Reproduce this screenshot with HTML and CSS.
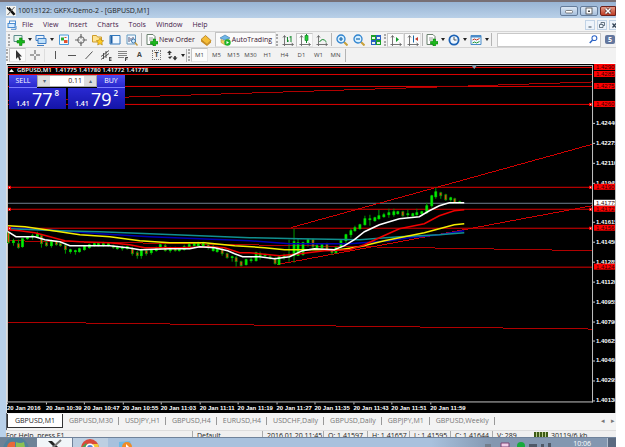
FILE: index.html
```
<!DOCTYPE html>
<html lang="en">
<head>
<meta charset="utf-8">
<title>10013122: GKFX-Demo-2 - [GBPUSD,M1]</title>
<link rel="stylesheet" href="styles.css">
</head>
<body>
<svg class="defs" aria-hidden="true">
  <symbol id="doc" viewBox="0 0 12 12"><path d="M1 .5h6l2 2v8H1z" fill="#fff" stroke="#69806c"/><path d="M3 4h4M3 6h3" stroke="#999"/><path d="M7 5h2.500v2.500H12V10H9.500v2H7v-2H4.500V7.500H7z" fill="#1cb81c" stroke="#07850b" stroke-width=".6"/></symbol>
  <symbol id="axes" viewBox="0 0 12 12"><path d="M2.500 2v8.500H11M.500 10.500h2v1.500M1 3.500L2.500 1.500 4 3.500M9.500 9l2 1.500-2 1.500" fill="none" stroke="#555" stroke-width=".8"/></symbol>
  <symbol id="lens" viewBox="0 0 12 12"><path d="M7.500 7.500l4 4" stroke="#c9a13b" stroke-width="2"/><circle cx="5" cy="5" r="4" fill="#d9f0ff" stroke="#2f84cf" stroke-width="1.300"/></symbol>
  <symbol id="app" viewBox="0 0 10 10"><path fill="#f4f4f0" d="M0 0h10v10H0z"/><path d="M1 1.500L8 9M3 1.500L9 8.500" stroke="#111" stroke-width="1.200"/><path d="M8.500 1L1.500 9" stroke="#555"/></symbol>
</svg>
<div class="screen">
  <div class="window">
    <header class="titlebar">
      <svg class="i10"><use href="#app"/></svg>
      <h1>10013122: GKFX-Demo-2 - [GBPUSD,M1]</h1>
      <div class="winbtns">
        <button aria-label="Minimize"><svg viewBox="0 0 10 8"><rect x="1.500" y="3.500" width="7" height="2.500" rx="1" fill="#fff" stroke="#555" stroke-width=".7"/></svg></button>
        <button aria-label="Maximize"><svg viewBox="0 0 10 8"><rect x="2" y="1" width="6" height="6" fill="#fff" stroke="#444" stroke-width=".8"/><path d="M4 3.500h2v1.500H4z" fill="#444"/></svg></button>
        <button class="close" aria-label="Close"><svg viewBox="0 0 10 8"><path d="M2.500 1.500l5 5m0-5l-5 5" stroke="#422" stroke-width="2.800"/><path d="M2.500 1.500l5 5m0-5l-5 5" stroke="#fff" stroke-width="1.600"/></svg></button>
      </div>
    </header>
    <nav class="menu">
      <svg class="i10" viewBox="0 0 10 10"><rect x="2.500" y="1" width="6" height="4" fill="#fff" stroke="#4a8bd0"/><rect x="1" y="3.500" width="7" height="4" fill="#d9ecff" stroke="#4a8bd0"/><path d="M4 9.300h5V6" fill="none" stroke="#4a8bd0"/></svg>
      <a href="#">File</a><a href="#">View</a><a href="#">Insert</a><a href="#">Charts</a><a href="#">Tools</a><a href="#">Window</a><a href="#">Help</a>
      <div class="mdibtns">
        <button aria-label="Minimize chart"><svg viewBox="0 0 8 8"><path d="M2.500 6h3" stroke="#345"/></svg></button>
        <button aria-label="Restore chart"><svg viewBox="0 0 8 8"><path d="M3 3V1.500h3.500v3H5M1.500 3.500H5v3H1.500z" fill="none" stroke="#456" stroke-width=".8"/></svg></button>
        <button aria-label="Close chart"><svg viewBox="0 0 8 8"><path d="M2.500 2.500l3.500 4m0-4l-3.500 4" stroke="#345" stroke-width="1.200"/></svg></button>
      </div>
    </nav>
    <div class="toolbar main">
      <i class="grip"></i>
      <button class="tool drop" aria-label="New chart"><svg viewBox="0 0 12 12"><path d="M1 1.500h8v6H1z" fill="#e8f5ef" stroke="#5b8c8a"/><path d="M6.500 4h2.500v2.500h2.500v2.500H9v2.500H6.500V9H4V6.500h2.500z" fill="#17b51b" stroke="#067d0b" stroke-width=".6"/></svg></button>
      <button class="tool drop" aria-label="Profiles"><svg viewBox="0 0 12 12"><path d="M1 1.500h8v5H1z" fill="#eaf4ff" stroke="#3d7dc3"/><path d="M3 4.500h8v5H3z" fill="#bfe0fa" stroke="#3d7dc3"/><path d="M2 11.500h7" stroke="#3d7dc3"/></svg></button>
      <button class="tool" aria-label="Market Watch"><svg viewBox="0 0 12 12"><path d="M1.500 1h9v9.500h-9z" fill="#f3faff" stroke="#4c9ad9"/><path d="M3 3.500h3v3H3z" fill="#2caa31"/><path d="M6 6h3.500v3H6z" fill="#e5502d"/><path d="M6.500 3.500h2" stroke="#e5502d"/></svg></button>
      <button class="tool" aria-label="Data Window"><svg viewBox="0 0 12 12"><circle cx="6" cy="6" r="3.300" fill="none" stroke="#666"/><path d="M6 0v4.500M6 7.500V12M0 6h4.500M7.500 6H12" stroke="#666" stroke-width="1.200"/></svg></button>
      <button class="tool" aria-label="Navigator"><svg viewBox="0 0 12 12"><path d="M.5 1.500h4l1 1.500h4v5h-9z" fill="#ffe493" stroke="#cd9c2a"/><path d="M8 4l1.200 2.300 2.500.4-1.800 1.700.4 2.600L8 9.800 5.700 11l.4-2.600-1.800-1.700 2.500-.4z" fill="#ffcc23" stroke="#ad7c0b" stroke-width=".6"/></svg></button>
      <button class="tool" aria-label="Terminal"><svg viewBox="0 0 12 12"><path d="M1 1.500h10v8.500H1z" fill="#f1f8ff" stroke="#3278bd"/><path d="M1.500 2h2v7.500h-2z" fill="#1d5ea4"/></svg></button>
      <button class="tool" aria-label="Strategy Tester"><svg viewBox="0 0 12 12"><path d="M1 1h8.500v9H1z" fill="#f1f8ff" stroke="#669ac0"/><path d="M3 3v5m2-4v3m2-4v3" stroke="#557"/><circle cx="7.500" cy="7" r="2" fill="#d4edff" stroke="#3c77ad"/><path d="M9 8.500l2.500 3" stroke="#c59a3c" stroke-width="1.400"/></svg></button>
      <i class="sep"></i>
      <button class="labelled"><svg class="i12"><use href="#doc"/></svg>New Order</button>
      <button class="tool" aria-label="MetaEditor"><svg viewBox="0 0 12 12"><path d="M1 5.500L5.500 1.500 11 6.500 7 10.500z" fill="#f5bd38" stroke="#a46c10" stroke-width=".7"/><path d="M1 5.500V7.500L7 12l4-3.500v-2L7 10.500z" fill="#c98b1c"/></svg></button>
      <button class="labelled on"><svg class="i12" viewBox="0 0 12 12"><path d="M1 4l5-3 5 3-5 2z" fill="#6fb7e9" stroke="#3676a8" stroke-width=".6"/><path d="M2 5.500l4 1.500 4-1.500v3L6 11 2 8.500z" fill="#f1cf63" stroke="#a7842f" stroke-width=".5"/><circle cx="8.500" cy="8.500" r="3.200" fill="#1eb329"/><path d="M7.500 7v3l2.500-1.500z" fill="#fff"/></svg>AutoTrading</button>
      <i class="grip"></i>
      <button class="tool" aria-label="Bar chart"><svg viewBox="0 0 12 12"><use href="#axes"/><path d="M5.500 3v5m0-1h1.500M9 2v6m0-5H7.500" stroke="#12882a"/></svg></button>
      <button class="tool on" aria-label="Candlesticks"><svg viewBox="0 0 12 12"><use href="#axes"/><path d="M7.500 0v9" stroke="#12882a"/><path d="M6 1.500h3v5H6z" fill="#26ce36" stroke="#12882a" stroke-width=".7"/></svg></button>
      <button class="tool" aria-label="Line chart"><svg viewBox="0 0 12 12"><use href="#axes"/><path d="M3.500 8q3-5 7 0" fill="none" stroke="#12882a"/></svg></button>
      <i class="sep"></i>
      <button class="tool" aria-label="Zoom in"><svg viewBox="0 0 12 12"><use href="#lens"/><path d="M3 5h4M5 3v4" stroke="#1768ac" stroke-width="1.200"/></svg></button>
      <button class="tool" aria-label="Zoom out"><svg viewBox="0 0 12 12"><use href="#lens"/><path d="M3 5h4" stroke="#1768ac" stroke-width="1.200"/></svg></button>
      <button class="tool" aria-label="Tile windows"><svg viewBox="0 0 12 12"><path d="M1 1h5v5H1zM6 6h5v5H6z" fill="#1d9f2b"/><path d="M6 1h5v5H6zM1 6h5v5H1z" fill="#285fc3"/><path d="M2 3h3v2H2zM7 3h3v2H7zM2 8h3v2H2zM7 8h3v2H7z" fill="#e9f6e9"/></svg></button>
      <i class="grip"></i>
      <button class="tool on" aria-label="Auto scroll"><svg viewBox="0 0 12 12"><use href="#axes"/><path d="M6 3v5l3-2.500z" fill="#129a2a"/></svg></button>
      <button class="tool on" aria-label="Chart shift"><svg viewBox="0 0 12 12"><use href="#axes"/><path d="M6.500 1.500v7" stroke="#1667a5"/><path d="M8 5l3-2v4z" fill="#c1392b"/></svg></button>
      <i class="sep"></i>
      <button class="tool drop" aria-label="Indicators"><svg><use href="#doc"/></svg></button>
      <button class="tool drop" aria-label="Periods"><svg viewBox="0 0 12 12"><circle cx="6" cy="6" r="4.600" fill="#eef7ff" stroke="#1c62b5" stroke-width="1.800"/><path d="M6 3v3h2.500" fill="none" stroke="#555"/></svg></button>
      <button class="tool drop" aria-label="Templates"><svg viewBox="0 0 12 12"><path d="M1 1.500h10v9H1z" fill="#eef7ff" stroke="#4a8bc8"/><path d="M1 2.500h10" stroke="#4a8bc8" stroke-width="2"/><path d="M2.500 6l2-1 2 1 3-1.500" fill="none" stroke="#c53c27"/><path d="M2.500 9l2-1 2 1 3-1.500" fill="none" stroke="#259a35"/></svg></button>
      <i class="sep"></i>
      <div class="search"><input type="text" aria-label="Search"><svg viewBox="0 0 10 10"><circle cx="6" cy="3.500" r="2.700" fill="#fff" stroke="#2c63c5" stroke-width="1.200"/><path d="M4 5.500L.8 9" stroke="#2c63c5" stroke-width="1.600"/></svg></div>
      <button class="chat" aria-label="Messages">5</button>
    </div>
    <div class="toolbar lines">
      <i class="grip"></i>
      <button class="tool on" aria-label="Cursor"><svg viewBox="0 0 12 12"><path d="M4 1v9l2-2 1.500 3.500 1.500-.7L7.500 7.500H10z" fill="#333"/></svg></button>
      <button class="tool" aria-label="Crosshair"><svg viewBox="0 0 12 12"><path d="M6 1v4M6 7v4M1 6h4M7 6h4" stroke="#555"/></svg></button>
      <i class="sep pale"></i>
      <button class="tool" aria-label="Vertical line"><svg viewBox="0 0 12 12"><path d="M6.500 2v8" stroke="#555"/></svg></button>
      <button class="tool" aria-label="Horizontal line"><svg viewBox="0 0 12 12"><path d="M2 6.500h8" stroke="#555"/></svg></button>
      <button class="tool" aria-label="Trendline"><svg viewBox="0 0 12 12"><path d="M2.500 10l7-7.500" stroke="#555"/></svg></button>
      <button class="tool" aria-label="Equidistant channel"><svg viewBox="0 0 12 12"><path d="M1 7.500l8-6M1 10.500l8-6M3.500 4v6M6 2v7M9.500 8.500h2m-2 1.500h2m-2 1.500h2M9.500 8v4" stroke="#444" stroke-width=".9"/></svg></button>
      <button class="tool" aria-label="Fibonacci retracement"><svg viewBox="0 0 12 12"><path d="M1 2.500h9M1 4.500h9M1 6.500h9M1 8.500h6" stroke="#666" stroke-width=".8"/><path d="M8.500 12V8.500h2.500M8.500 10H10.500" stroke="#444" fill="none"/></svg></button>
      <button class="tool letter">A</button>
      <button class="tool letter"><span>T</span></button>
      <button class="tool drop" aria-label="Arrows"><svg viewBox="0 0 12 12"><path d="M1 4l2.500-2.500L6 4H4.300v2H2.700V4zM6.500 8.500h1.700V7h1.600v1.500h1.700L9 11.500zM2 8l2 2 2.500-3" fill="#333"/></svg></button>
      <i class="sep"></i><i class="grip"></i>
      <button class="tf on">M1</button><button class="tf">M5</button><button class="tf">M15</button><button class="tf">M30</button><button class="tf">H1</button><button class="tf">H4</button><button class="tf">D1</button><button class="tf">W1</button><button class="tf">MN</button>
      <i class="sep"></i>
    </div>

    <main class="chart">
      <svg id="plot" viewBox="7 64 609 350">
        <path class="frame" d="M7.500 65V402.500H594M593.500 65V403M7 65.500H594"/>
        <path class="bid" d="M8 203.500H593"/>
        <path class="level" d="M8 67.500H593M8 74.500H593M8 86.500H593M8 104.500H593M8 187.500H593M8 209.500H593M8 228.500H593M8 267.500H593"/>
        <path class="slope" d="M8 101L593 82M8 241L593 251M8 322.500L593 329.500"/>
        <path class="trend" d="M291 228L593 144.500M277 265L593 206"/>
        <g id="candles"></g>
        <polyline class="ma blue" points="8,228 60,231 100,234 150,237 200,239 250,241 290,244 350,244 390,241 410,238 440,235 465,231"/>
        <polyline class="ma teal" points="8,229 60,231 100,232 150,234 200,236 250,238 300,239 360,240 400,237 440,235 465,233"/>
        <polyline class="ma yellow" points="8,226 25,227 60,232 80,235 110,237 140,241 170,243 205,243 235,246 265,248 285,250 340,250 360,247 385,241 410,236 425,233 440,229 455,225 465,224"/>
        <polyline class="ma red" points="8,230 20,231 35,233 50,237 65,241 80,242 110,243 130,245 145,248 180,248 210,247 225,248 240,253 250,253 280,256 300,254 325,251 350,250 365,245 380,238 400,229 425,224 440,216 455,211 465,210"/>
        <polyline class="ma white" points="8,232 16,237 35,237 45,240 60,242 70,246 110,246 128,248 140,250 170,249 190,249 200,247 215,248 228,251 235,254 243,257 260,257 275,259 290,257 303,251 315,249 335,250 345,246 355,240 365,232 380,225 400,219 420,217 430,211 440,206 450,203 465,203"/>
        <path class="shift" d="M472 65h6l-3 4z"/>
        <path class="arrow" d="M9 72l2.500-3 2.500 3z"/>
        <text class="label" x="17" y="72">GBPUSD,M1&#160; 1.41775 1.41780 1.41772 1.41778</text>
        <g id="axis"></g>
      </svg>
      <form class="trade">
        <button class="side sell" type="button"><b>SELL</b></button>
        <div class="lot"><button type="button" aria-label="Less">▾</button><input type="text" value="0.11" aria-label="Volume"><button type="button" aria-label="More">▴</button></div>
        <button class="side buy" type="button"><b>BUY</b></button>
        <output class="quote"><small>1.41</small><strong>77</strong><sup>8</sup></output>
        <output class="quote"><small>1.41</small><strong>79</strong><sup>2</sup></output>
      </form>
    </main>

    <nav class="tabs">
      <a class="current" href="#">GBPUSD,M1</a><a href="#">GBPUSD,M30</a><a href="#">USDJPY,H1</a><a href="#">GBPUSD,H4</a><a href="#">EURUSD,H4</a><a href="#">USDCHF,Daily</a><a href="#">GBPUSD,Daily</a><a href="#">GBPJPY,M1</a><a href="#">GBPUSD,Weekly</a>
      <div class="scroll"><span>◂</span><span>▸</span></div>
    </nav>
    <footer class="status">
      <span>For Help, press F1</span><span>Default</span><span>2016.01.20 11:45</span><span>O: 1.41597</span><span>H: 1.41657</span><span>L: 1.41595</span><span>C: 1.41644</span><span>V: 289</span>
      <span class="net"><i></i>30119/6 kb</span>
    </footer>
  </div>
  <div class="taskbar">
    <button class="start" aria-label="Start"><svg viewBox="0 0 36 9"><circle cx="16" cy="12" r="13" fill="#50819b"/><path d="M7 9q1-6 8-5v5z" fill="#e8683a"/><path d="M16 4q4 2 8 0l1 5h-9z" fill="#8cc152"/></svg></button>
    <button class="task light" aria-label="MetaTrader"><svg viewBox="0 0 36 9"><path d="M11 3h4l9 9h-4z" fill="#222"/><path d="M24 2L13 12" stroke="#777" stroke-width="2"/></svg></button>
    <button class="task" aria-label="Chrome"><svg viewBox="0 0 36 9"><circle cx="17" cy="10" r="9" fill="#d94a3a"/><path d="M8 10l5-5 3 5z" fill="#4aa351"/><path d="M20 6h5l1 4h-6z" fill="#f2c83b"/><circle cx="17" cy="10" r="4.500" fill="#fff"/><circle cx="17" cy="10" r="3" fill="#4a86d8"/></svg></button>
    <button class="task bare" aria-label="Media Player"><svg viewBox="0 0 36 9"><path d="M11 4l11-1 2 6H11z" fill="#6fb9e5"/><circle cx="19" cy="9" r="5" fill="#f18b26"/><path d="M18 6v3h3z" fill="#fff"/></svg></button>
    <div class="tray"><svg viewBox="0 0 72 9"><path d="M2 6h6v3H2z" fill="#737e8c"/><path d="M18 5h8v4h-8z" fill="#f0cfe8" stroke="#7c4474"/><circle cx="38" cy="8" r="4" fill="#18aa3d"/><path d="M46 6h8v3h-8zM58 6h3v3h-3zM65 5h3v4h-3z" fill="#4e5968"/></svg><time>10:06</time></div>
    <button class="desktop" aria-label="Show desktop"></button>
  </div>
</div>
<script src="chart.js"></script>
</body>
</html>
```
FILE: styles.css
```
* { box-sizing: border-box; }
body { margin: 0; background: #fff; font: 7px/10px "Open Sans", "Noto Sans", sans-serif; color: #222; overflow: hidden; }
button, input { font: inherit; color: inherit; margin: 0; padding: 0; border: 0; background: none; }
a { color: inherit; text-decoration: none; }
svg { display: block; }
.defs { position: absolute; width: 0; height: 0; }
.screen { margin-right: 9px; overflow: hidden; border-top: 2px solid #776f75; }
.window { background: #f0f0f0; border-left: 6px solid #b9d1ea; box-shadow: inset 1px 0 #59616b; }
.i10 { width: 10px; height: 10px; flex: none; }
.i12 { width: 12px; height: 12px; flex: none; }

.titlebar { display: flex; align-items: center; gap: 2px; height: 16px; margin-left: -6px; padding: 1px 0 0 6px; background: linear-gradient(#98b4d4, #b9d0e8); }
.titlebar h1 { margin: 0; font-size: 7px; font-weight: 400; flex: 1; }
.winbtns { display: flex; gap: 2px; }
.winbtns button { width: 18px; height: 10px; border: 1px solid #647c9b; border-radius: 2px; background: linear-gradient(#dbe7f4, #a6bfdc); }
.winbtns button.close { width: 16px; border-color: #6c211c; border-radius: 2px 0 0 2px; background: linear-gradient(#e39a88, #bf3d25); }
.winbtns svg { width: 10px; height: 8px; margin: auto; }

.menu { display: flex; align-items: center; gap: 10px; height: 13px; padding-left: 1px; background: #f4f4f4; color: #45204a; }
.menu .i10 { margin-right: -5px; }
.mdibtns { display: flex; gap: 2px; margin-left: auto; }
.mdibtns button { width: 10px; height: 10px; border: 1px solid #c1d3e6; background: #eef4fb; }
.mdibtns button:last-child { width: 7px; border-right: 0; }
.mdibtns svg { width: 8px; height: 8px; }

.toolbar { display: flex; align-items: center; border-top: 1px solid #d5d5d5; background: #f2f2f2; }
.main { height: 16px; padding-left: 2px; }
.lines { height: 17px; padding-bottom: 1px; border-bottom: 1px solid #fff; }
.grip { width: 3px; height: 12px; border-left: 2px dotted #aaa; flex: none; }
.sep { width: 1px; height: 13px; margin: 0 1px; background: #b4b4b4; flex: none; }
.sep.pale { background: #ddd; }
.tool { display: flex; align-items: center; justify-content: center; width: 17px; height: 14px; flex: none; }
.tool svg { width: 12px; height: 12px; flex: none; }
.tool.drop { width: 22px; gap: 3px; }
.lines .tool.drop { width: 20px; }
.tool.drop::after { content: ""; border: 2px solid transparent; border-top: 3px solid #222; border-bottom: 0; }
.on { background: #fbfbfb; border: 1px solid #c4c4c4; border-right-color: #e4e4e4; border-bottom-color: #e4e4e4; }
.labelled { display: flex; align-items: center; gap: 1px; height: 15px; padding: 0 3px; color: #3a1530; white-space: nowrap; }
.tool.letter { font-weight: 700; color: #444; }
.letter span { border: 1px dotted #777; padding: 0 1px; line-height: 8px; }
.tf { width: 17px; height: 14px; font-size: 6px; color: #444; flex: none; }
.search { display: flex; align-items: center; flex: 1; height: 14px; margin-left: 4px; padding: 0 2px; background: #fff; border: 1px solid #c9c9c9; }
.search input { flex: 1; min-width: 0; outline: 0; }
.search svg { width: 9px; height: 9px; }
.chat { width: 10px; height: 9px; margin: 0 1px 0 4px; border-radius: 2px; background: #64779e; color: #fff; font-weight: 700; line-height: 9px; flex: none; }

.chart { position: relative; margin-left: 1px; background: #000; border-right: 1px solid #bbb; box-shadow: -1px 0 #ddd; }
.chart > svg { width: 100%; height: auto; }
.frame { fill: none; stroke: #c4c4c4; }
.bid { stroke: #708090; }
.level { stroke: #e00000; }
.slope { stroke: #b00000; shape-rendering: crispEdges; }
.trend { stroke: #d00000; shape-rendering: crispEdges; }
.ma { fill: none; stroke-width: 1.5; }
.ma.blue { stroke: #0000b4; }
.ma.teal { stroke: #109090; }
.ma.yellow { stroke: #f4ee00; }
.ma.red { stroke: #f00000; }
.ma.white { stroke: #fff; }
.up { stroke: #00d800; fill: #00f000; }
.down { stroke: #00a000; fill: #ff3c14; }
.wick { stroke-width: 1; stroke: #009800; }
.up, .down { stroke-width: .7; }
.shift { fill: #8aa5b5; }
.arrow { fill: #fff; }
.label, .tick { fill: #fff; font-size: 6px; font-weight: 700; font-family: "Liberation Sans", sans-serif; }
.label { font-weight: 600; font-family: "Open Sans", sans-serif; }
.mark { stroke: #ccc; }
.tag { fill: #f00; }
.tag.now { fill: #fff; }
.tick.dark { fill: #300; font-weight: 400; }
.handle { fill: #fff; stroke: #f00; }

.trade { position: absolute; left: 2px; top: 11px; display: grid; grid-template-columns: 28px 29px 2px 29px 28px; grid-template-rows: 13px 21px; width: 117px; }
.side { background: linear-gradient(#4a4af0, #2828cc); color: #fff; border-bottom: 1px solid #7c7cff; }
.side b { font-weight: 400; font-size: 7px; }
.sell { grid-column: 1; }
.buy { grid-column: 5; }
.lot { grid-column: 2 / 5; display: flex; margin: 0 0 1px; background: #fff; border: 1px solid #aaa; color: #311; }
.lot button { width: 12px; background: #ddd; color: #567; font-size: 6px; line-height: 8px; }
.lot input { flex: 1; min-width: 0; text-align: right; padding-right: 2px; font-size: 7px; }
.quote { grid-column: 1 / 3; display: flex; justify-content: center; align-items: flex-end; gap: 2px; color: #fff; background: linear-gradient(#2a2ad2, #1414a8); }
.quote + .quote { grid-column: 4 / 6; }
.quote small { font-size: 7px; font-weight: 600; line-height: 10px; }
.quote strong { font-size: 18px; font-weight: 400; line-height: 20px; }
.quote sup { font-size: 8px; font-weight: 600; line-height: 10px; align-self: flex-start; }

.tabs { display: flex; height: 17px; margin-left: 1px; padding: 1px 0 2px; background: #f3f3f3; color: #777; align-items: stretch; }
.tabs a { display: flex; align-items: center; padding: 0 6px; }
.tabs a:not(.current) { background: linear-gradient(#999, #999) right center / 1px 8px no-repeat; }
.tabs .current { padding: 0 7px; background: #fff; border: 1px solid #333; border-top: 0; color: #222; }
.scroll { display: flex; align-items: center; gap: 6px; margin-left: auto; padding-right: 1px; }
.status { display: grid; grid-template-columns: 186px 70px 61px 44px 42px 41px 42px 37px 1fr; height: 7px; overflow: hidden; border-top: 1px solid #ddd; background: #f0f0f0; line-height: 10px; white-space: nowrap; }
.status span { padding-left: 4px; border-left: 1px solid #aaa; }
.status span:first-child { padding-left: 0; border: 0; }
.status .net { display: flex; gap: 3px; border: 0; }
.net i { width: 14px; height: 8px; margin: 1px 0 0 1px; background: repeating-linear-gradient(90deg, #3d5b16 0 2px, #b7c98d 2px 3px); }
.taskbar { display: flex; height: 10px; overflow: hidden; border-top: 1px solid #70839b; background: linear-gradient(90deg, #a8c1dd 70%, #8397b0 80%); }
.taskbar svg { height: 9px; }
.start, .task { width: 36px; background: #6d8296; }
.task { border-left: 1px solid #708299; background: #bdcfe2; }
.task.light { background: #f1f5f8; }
.task.bare { border: 0; background: none; }
.tray { display: flex; gap: 18px; margin-left: auto; color: #fff; }
.tray svg { width: 72px; }
.tray time { line-height: 11px; }
.desktop { width: 9px; margin-left: 16px; background: #5b6a80; border-left: 1px solid #b3c0cf; }
```
FILE: chart.js
```
// Each candle: high, body top, body bottom, low, direction (1 up, 0 down), in plot units.
const candles = [
  [232,233,243,244,0],[239,241,243,246,1],[240,244,248,249,0],[239,239,247,248,1],[237,237,239,240,1],[234,236,237,240,1],
  [232,234,237,238,1],[235,236,244,248,0],[241,243,246,247,0],[240,242,246,248,1],[241,242,245,246,0],[243,244,246,247,0],
  [244,246,250,254,0],[249,250,252,254,1],[250,251,252,255,1],[248,249,252,253,1],[246,246,250,251,1],[244,245,248,249,1],
  [243,244,246,247,1],[243,244,246,247,1],[242,244,245,247,1],[243,244,246,247,1],[245,246,248,249,0],[246,248,249,250,1],
  [246,248,249,251,1],[246,247,249,250,1],[247,249,254,256,0],[251,253,256,259,0],[249,250,256,259,1],[249,251,254,256,0],
  [249,250,253,255,1],[247,248,251,252,1],[244,245,249,250,1],[244,246,251,252,0],[247,249,251,253,1],[247,249,251,252,0],
  [248,249,251,252,1],[245,247,250,251,1],[243,245,247,248,1],[243,244,246,248,1],[242,244,246,248,1],[242,244,246,248,1],
  [243,245,248,250,0],[245,247,251,252,1],[247,249,252,253,1],[248,250,254,256,0],[253,254,258,259,0],[256,257,258,262,1],
  [256,258,262,267,0],[261,262,266,267,0],[259,260,265,266,1],[257,260,261,263,1],[252,253,261,262,1],[252,254,256,260,1],
  [254,255,256,258,1],[255,257,258,260,0],[257,259,264,265,0],[256,257,265,265,1],[254,256,258,260,1],[240,255,256,262,1],
  [229,242,256,263,1],[239,243,256,256,1],[242,243,255,256,1],[239,240,244,247,1],[239,240,247,250,0],[244,246,248,250,1],
  [244,245,248,249,1],[243,244,250,251,0],[249,250,253,255,0],[247,248,253,254,1],[241,241,247,249,1],[234,235,241,245,1],
  [229,231,235,238,1],[226,228,231,232,1],[224,225,229,230,1],[216,219,225,226,1],[215,219,220,226,1],[217,218,221,222,1],
  [210,216,219,220,1],[213,215,217,218,1],[209,213,215,218,1],[209,212,215,217,1],[211,212,214,215,1],[211,212,216,217,0],
  [210,214,215,218,1],[213,214,216,217,1],[209,213,215,216,1],[211,212,214,215,1],[203,206,213,214,1],[195,196,206,208,1],
  [188,192,197,199,1],[192,193,196,199,0],[194,195,200,201,0],[197,198,200,202,1],[198,199,203,204,0],[201,202,203,204,1]
];
const NS = 'http://www.w3.org/2000/svg';
function add(parent, name, attrs, text) {
  const el = document.createElementNS(NS, name);
  for (const key in attrs) el.setAttribute(key, attrs[key]);
  if (text) el.textContent = text;
  parent.appendChild(el);
}
const group = document.getElementById('candles');
candles.forEach(([high, top, bottom, low, up], i) => {
  const x = Math.round(8 + i * 4.76);
  add(group, 'path', { class: 'wick', d: `M${x + 0.5} ${high}V${low}` });
  add(group, 'rect', { class: up ? 'up' : 'down', x: x - 0.5, y: top, width: 2, height: Math.max(1, bottom - top) });
});

const axis = document.getElementById('axis');
['1.42440','1.42275','1.42110','1.41945','','1.41615','1.41450','1.41285','1.41120','1.40955','1.40790','1.40625','1.40460','1.40295','1.40130'].forEach((price, i) => {
  if (!price) return;
  const y = Math.round(123 + i * 19.85);
  add(axis, 'path', { class: 'mark', d: `M594 ${y + 0.5}h2` });
  add(axis, 'text', { class: 'tick', x: 597, y: y + 2 }, price);
});
[['1.42907',67],['1.42853',74],['1.42753',86],['1.42603',104],['1.41907',187],['1.41775',203],['1.41727',209],['1.41563',228],['1.41244',267]].forEach(([price, y]) => {
  const now = y === 203;
  add(axis, 'rect', { class: now ? 'tag now' : 'tag', x: 595, y: y - 3, width: 21, height: 6 });
  add(axis, 'text', { class: 'tick dark', x: 597, y: y + 2 }, price);
});
for (const y of [187, 209, 228]) add(axis, 'rect', { class: 'handle', x: 8.5, y: y - 0.5, width: 2, height: 2 });
for (const y of [104, 187, 209, 228]) add(axis, 'rect', { class: 'handle', x: 590.5, y: y - 0.5, width: 2, height: 2 });

['20 Jan 2016','20 Jan 10:39','20 Jan 10:47','20 Jan 10:55','20 Jan 11:03','20 Jan 11:11','20 Jan 11:19','20 Jan 11:27','20 Jan 11:35','20 Jan 11:43','20 Jan 11:51','20 Jan 11:59'].forEach((time, i) => {
  const x = Math.round(7 + i * 38.5);
  add(axis, 'path', { class: 'mark', d: `M${x + 0.5} 403v2` });
  add(axis, 'text', { class: 'tick', x, y: 411 }, time);
});
```
